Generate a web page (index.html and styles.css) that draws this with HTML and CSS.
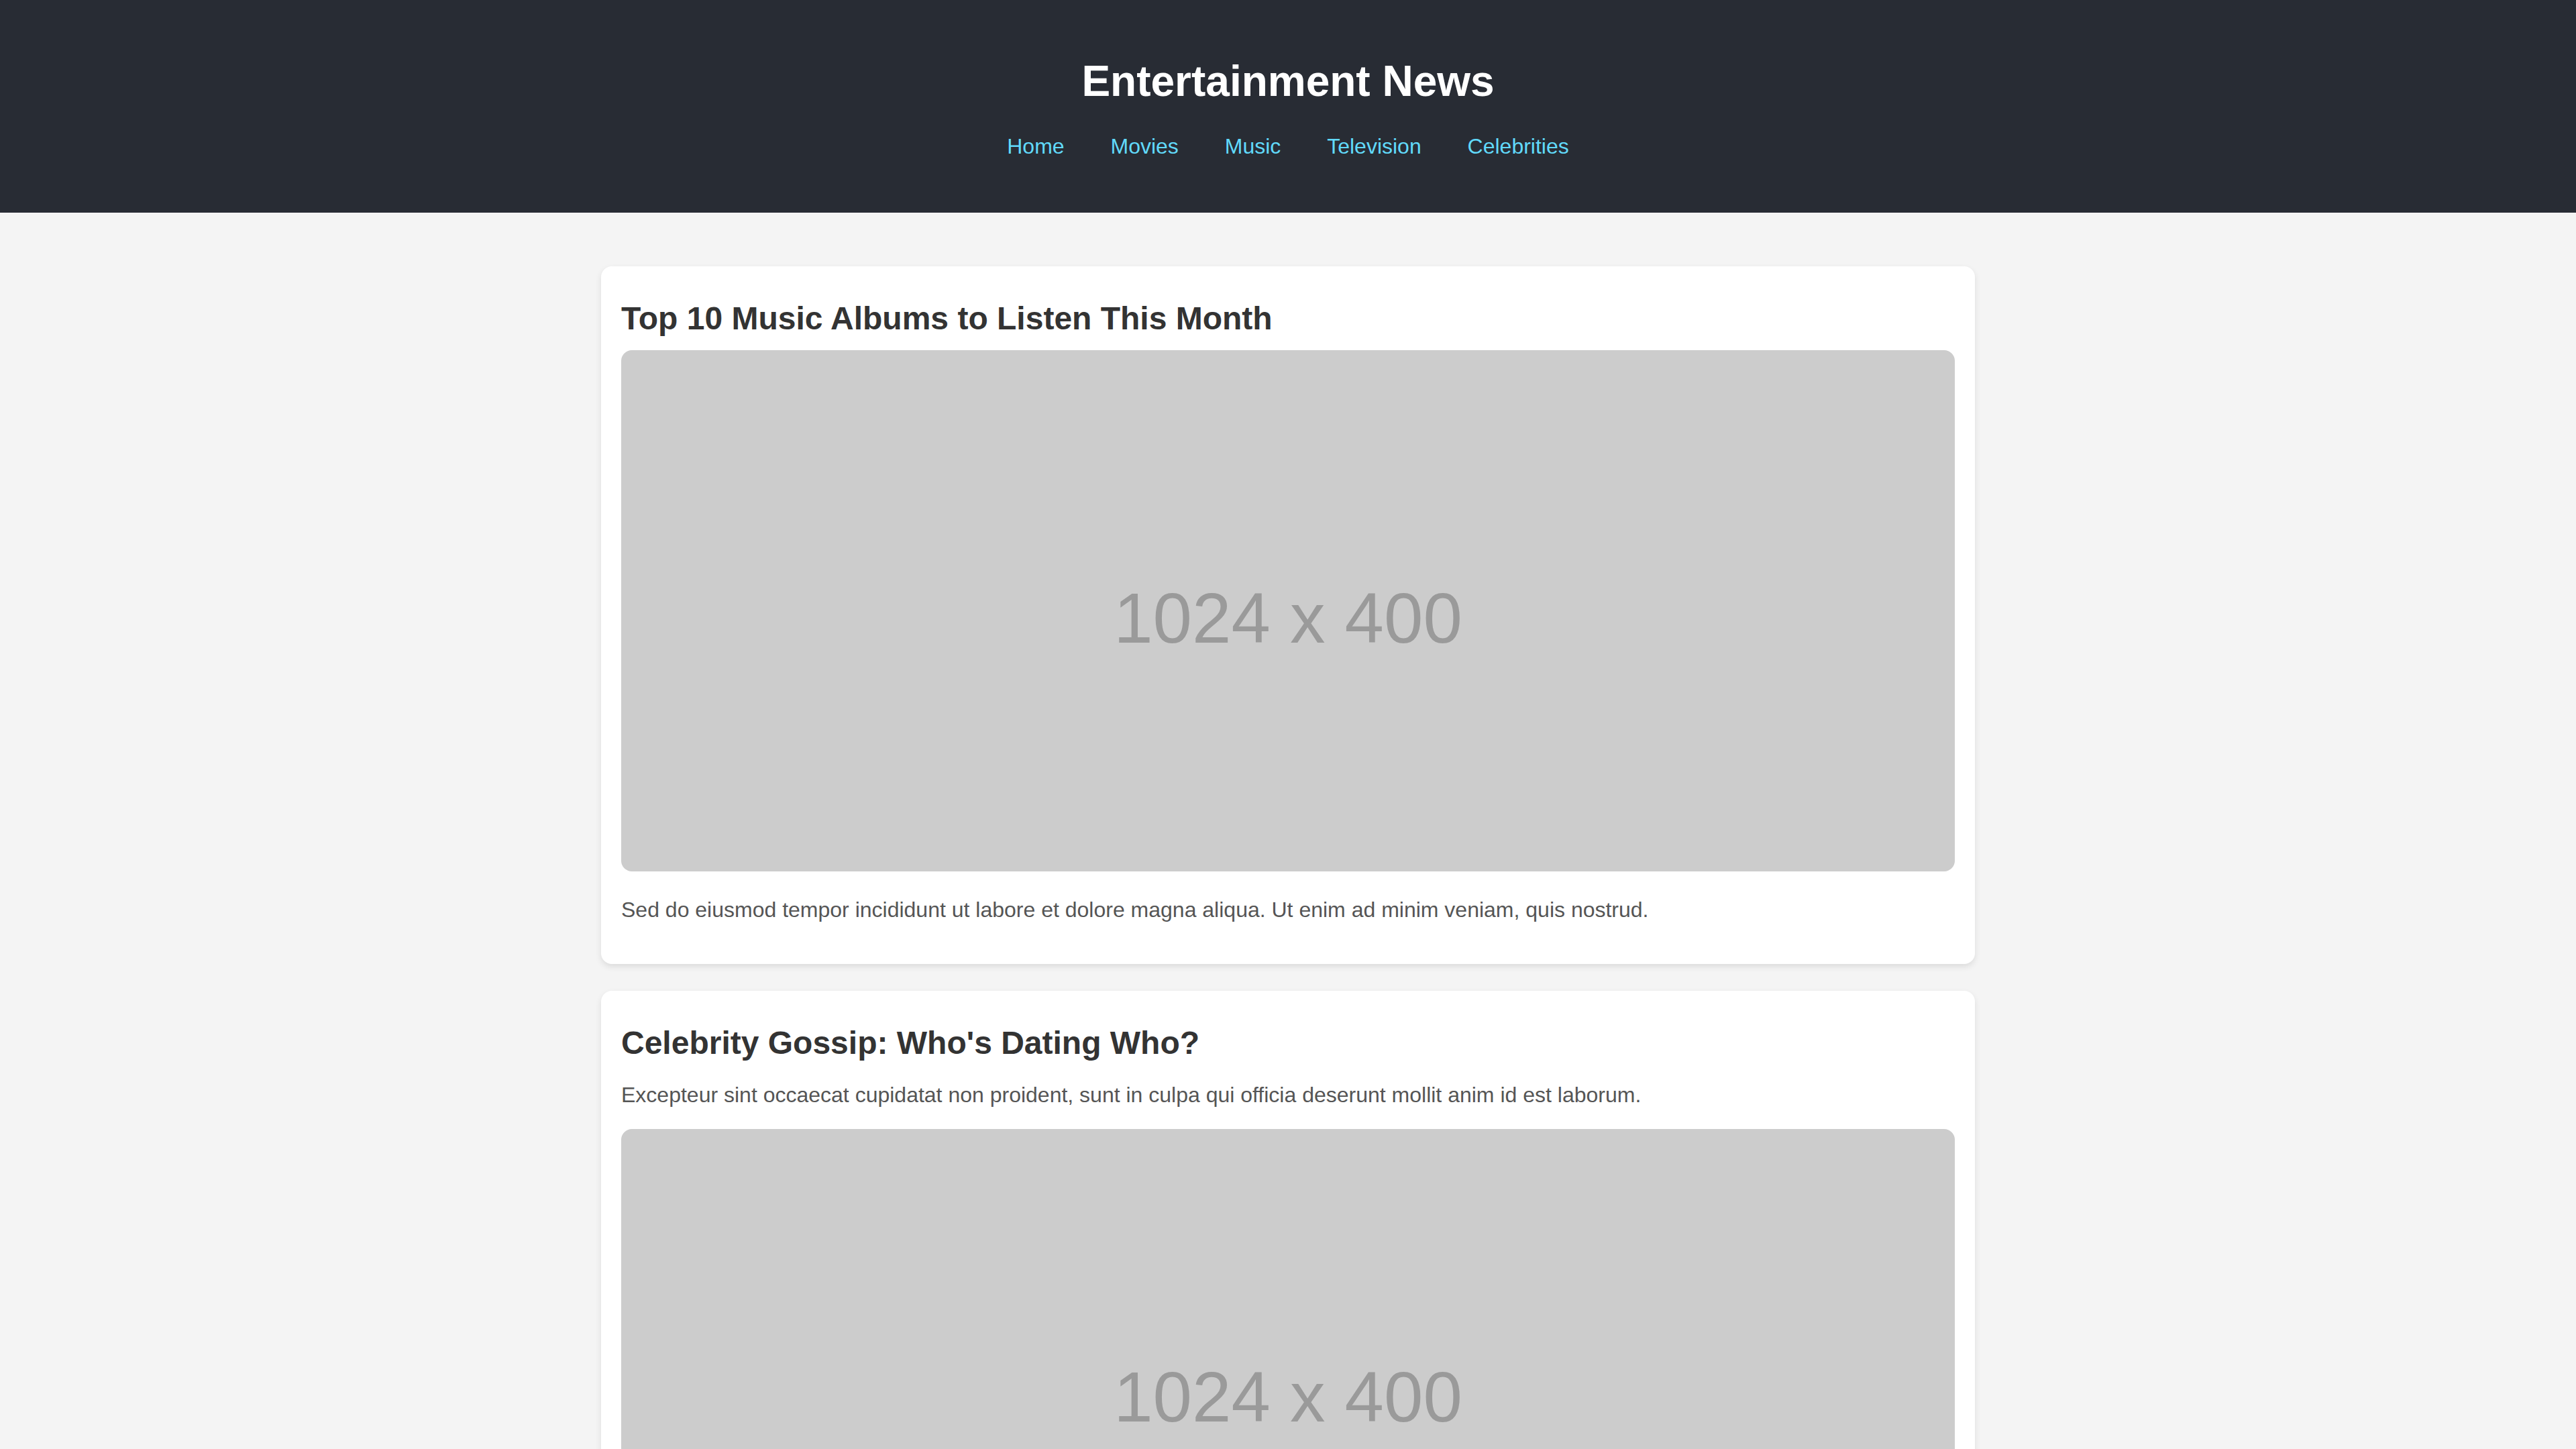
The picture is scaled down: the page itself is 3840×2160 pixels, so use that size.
FILE: index.html
```html
<!DOCTYPE html>
<html lang="en">
<head>
<meta charset="utf-8">
<title>Entertainment News</title>
<link rel="stylesheet" href="styles.css">
</head>
<body>
<header class="site-header">
  <h1 class="site-title">Entertainment News</h1>
  <nav class="site-nav">
    <a href="#">Home</a>
    <a href="#">Movies</a>
    <a href="#">Music</a>
    <a href="#">Television</a>
    <a href="#">Celebrities</a>
  </nav>
</header>
<main class="content">
  <article class="card">
    <h2 class="card-title">Top 10 Music Albums to Listen This Month</h2>
    <div class="placeholder"><span>1024 x 400</span></div>
    <p class="card-text after-image">Sed do eiusmod tempor incididunt ut labore et dolore magna aliqua. Ut enim ad minim veniam, quis nostrud.</p>
  </article>
  <article class="card">
    <h2 class="card-title">Celebrity Gossip: Who's Dating Who?</h2>
    <p class="card-text">Excepteur sint occaecat cupidatat non proident, sunt in culpa qui officia deserunt mollit anim id est laborum.</p>
    <div class="placeholder"><span>1024 x 400</span></div>
  </article>
</main>
</body>
</html>
```
FILE: styles.css
```css
html, body {
  margin: 0;
  padding: 0;
}
body {
  background: #f4f4f4;
  font-family: "Liberation Sans", Arial, sans-serif;
  font-size: 32px;
  color: #333;
}
.site-header {
  background: #282c34;
  padding: 84px 0 80px;
  text-align: center;
}
.site-title {
  margin: 0 0 42px;
  font-size: 64px;
  font-weight: bold;
  color: #ffffff;
  line-height: normal;
}
.site-nav {
  font-size: 32px;
  line-height: normal;
}
.site-nav a {
  color: #61dafb;
  text-decoration: none;
  margin: 0 30px;
}
.content {
  padding: 80px 0 40px;
}
.card {
  width: 2048px;
  box-sizing: border-box;
  margin: 0 auto 40px;
  padding: 30px 30px 30px;
  background: #ffffff;
  border-radius: 16px;
  box-shadow: 0 4px 10px rgba(0, 0, 0, 0.1);
}
.card-title {
  margin: 20px 0 20px;
  font-size: 48px;
  font-weight: bold;
  color: #333;
  line-height: normal;
}
.card-text {
  margin: 32px 0 32px;
  font-size: 32px;
  line-height: normal;
  color: #555;
}
.card-text.after-image {
  margin-top: 39px;
}
.placeholder {
  width: 100%;
  aspect-ratio: 1024 / 400;
  background: #cccccc;
  border-radius: 16px;
  display: flex;
  align-items: center;
  justify-content: center;
}
.placeholder span {
  font-size: 105px;
  line-height: 1;
  color: #9a9a9a;
  margin-top: 23px;
}
```
